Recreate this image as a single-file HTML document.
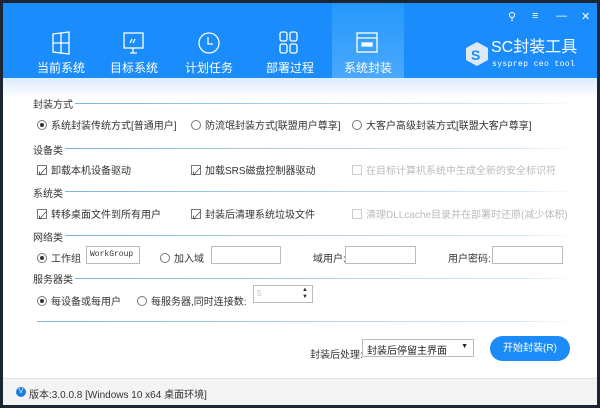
<!DOCTYPE html><html><head><meta charset="utf-8"><style>
*{margin:0;padding:0;box-sizing:border-box}
body{width:600px;height:408px;background:#1b2533;position:relative;overflow:hidden;font-family:"Liberation Sans","Noto Sans CJK SC",sans-serif;font-size:10px;color:#333}
.win{position:absolute;left:3px;top:3px;width:594px;height:402px;background:#fff}
.hdr{position:absolute;left:0;top:0;width:594px;height:75px;background:#1a8cfb}
.tab{position:absolute;top:0;height:75px;width:72px;text-align:center;color:#fff;font-size:12px}
.tab span{position:absolute;left:0;right:0;top:56px}
.tab svg{position:absolute;left:22px;top:28px}
.act{background:linear-gradient(#2598fc,#4aa8fd)}
.ctl{position:absolute;top:7px;color:#fff;font-size:11px}
.cont{position:absolute;left:0;top:75px;width:594px;height:300px;background:linear-gradient(#dcecfb 0,#fff 20px)}
.sec{position:absolute;left:30px;font-size:10px;color:#333}
.ln{position:absolute;height:1px;background:linear-gradient(90deg,#7cb6dc,#d8e9f5 90%,#fff)}
.it{position:absolute;font-size:10px;color:#333;white-space:nowrap}
.it i{display:inline-block;width:10px;height:10px;border:1px solid #777;vertical-align:-1px;margin-right:4px;background:#fff;position:relative}
.r i{border-radius:50%}
.r.on i:after{content:"";position:absolute;left:2px;top:2px;width:4px;height:4px;border-radius:50%;background:#333}
.c.on i:after{content:"✓";position:absolute;left:0;top:-3px;font-size:10px;color:#222}
.dis{color:#bbb}.dis i{border-color:#ccc}
.inp{position:absolute;height:18px;border:1px solid #bbb;background:#fff;font-size:8px;font-family:"Liberation Mono",monospace;padding:3px}
.ft{position:absolute;left:0;top:375px;width:594px;height:27px;background:#f4f4f4;border-top:1px solid #e3e3e3;font-size:10px;padding:7px 0 0 20px}
</style></head><body><div class="win">
<div class="hdr">
<div class="ctl" style="left:505px">&#9906;</div><div class="ctl" style="left:529px">≡</div><div class="ctl" style="left:553px">—</div><div class="ctl" style="left:578px">✕</div>
<div class="tab" style="left:22px"><svg width="28" height="24"><g fill="none" stroke="#fff" stroke-width="1.3"><path d="M6 3l16-2v22l-16-2z M6 12h16 M14 2v20"/></g></svg><span>当前系统</span></div>
<div class="tab" style="left:95px"><svg width="28" height="26"><g fill="none" stroke="#fff" stroke-width="1.3"><rect x="4" y="2" width="19" height="15"/><path d="M10 22h7 M13 17v5 M12 8l-2 4 M15 8l-2 4"/></g></svg><span>目标系统</span></div>
<div class="tab" style="left:170px"><svg width="28" height="26"><g fill="none" stroke="#fff" stroke-width="1.3"><circle cx="14" cy="12" r="10"/><path d="M13 6v7h5"/></g></svg><span>计划任务</span></div>
<div class="tab" style="left:251px"><svg width="28" height="26"><g fill="none" stroke="#fff" stroke-width="1.3"><rect x="4" y="1" width="7" height="9" rx="2"/><rect x="14" y="1" width="7" height="9" rx="2"/><rect x="4" y="13" width="7" height="9" rx="2"/><rect x="14" y="13" width="7" height="9" rx="2"/></g></svg><span>部署过程</span></div>
<div class="tab act" style="left:329px"><svg width="28" height="26"><g fill="none" stroke="#fff" stroke-width="1.3"><rect x="3" y="2" width="20" height="19"/><path d="M3 7h20"/><rect x="8" y="12" width="10" height="3" fill="#fff"/></g></svg><span>系统封装</span></div>
<svg style="position:absolute;left:460px;top:37px" width="28" height="28"><path d="M14 2l11 6v12l-11 6-11-6V8z" fill="#dfe9f5"/><text x="8" y="20" font-size="14" font-weight="bold" fill="#1a8cfb" font-family="Liberation Sans">S</text></svg>
<div style="position:absolute;left:488px;top:35px;color:#fff;font-size:16px;line-height:20px">SC封装工具</div>
<div style="position:absolute;left:489px;top:57px;color:#fff;font-size:8px;line-height:9px;font-family:'Liberation Mono',monospace;letter-spacing:.4px">sysprep ceo tool</div>
</div>
<div class="cont"></div>
<div class="sec" style="top:93px">封装方式</div><div class="ln" style="left:72px;top:100px;width:500px"></div>
<div class="it r on" style="left:34px;top:114px"><i></i>系统封装传统方式[普通用户]</div>
<div class="it r" style="left:188px;top:114px"><i></i>防流氓封装方式[联盟用户尊享]</div>
<div class="it r" style="left:349px;top:114px"><i></i>大客户高级封装方式[联盟大客户尊享]</div>
<div class="sec" style="top:139px">设备类</div><div class="ln" style="left:62px;top:145px;width:510px"></div>
<div class="it c on" style="left:34px;top:159px"><i></i>卸载本机设备驱动</div>
<div class="it c on" style="left:188px;top:159px"><i></i>加载SRS磁盘控制器驱动</div>
<div class="it c dis" style="left:349px;top:159px"><i></i>在目标计算机系统中生成全新的安全标识符</div>
<div class="sec" style="top:182px">系统类</div><div class="ln" style="left:62px;top:188px;width:510px"></div>
<div class="it c on" style="left:34px;top:203px"><i></i>转移桌面文件到所有用户</div>
<div class="it c on" style="left:188px;top:203px"><i></i>封装后清理系统垃圾文件</div>
<div class="it c dis" style="left:349px;top:203px"><i></i>清理DLLcache目录并在部署时还原(减少体积)</div>
<div class="sec" style="top:226px">网络类</div><div class="ln" style="left:62px;top:232px;width:510px"></div>
<div class="it r on" style="left:34px;top:247px"><i></i>工作组</div>
<div class="inp" style="left:83px;top:243px;width:54px">WorkGroup</div>
<div class="it r" style="left:157px;top:247px"><i></i>加入域</div>
<div class="inp" style="left:208px;top:243px;width:70px"></div>
<div class="it" style="left:310px;top:247px">域用户:</div>
<div class="inp" style="left:342px;top:243px;width:71px"></div>
<div class="it" style="left:445px;top:247px">用户密码:</div>
<div class="inp" style="left:489px;top:243px;width:71px"></div>
<div class="sec" style="top:268px">服务器类</div><div class="ln" style="left:72px;top:275px;width:500px"></div>
<div class="it r on" style="left:34px;top:290px"><i></i>每设备或每用户</div>
<div class="it r" style="left:134px;top:290px"><i></i>每服务器,同时连接数:</div>
<div class="inp" style="left:250px;top:282px;width:60px;color:#bbb;font-family:'Liberation Sans'">5<span style="position:absolute;right:4px;top:1px;color:#333;font-size:6px;line-height:7px">▲<br>▼</span></div>
<div class="ln" style="left:34px;top:318px;width:538px"></div>
<div class="it" style="left:307px;top:343px">封装后处理:</div>
<div class="inp" style="left:359px;top:336px;width:112px;height:18px;font-family:'Liberation Sans','Noto Sans CJK SC';font-size:10px;color:#222;padding:2px 4px">封装后停留主界面<span style="position:absolute;right:5px;top:3px;font-size:7px">▼</span></div>
<div style="position:absolute;left:487px;top:333px;width:80px;height:25px;border-radius:13px;background:#1b8cf7;color:#fff;text-align:center;line-height:25px;font-size:10px">开始封装(R)</div>
<div class="ft"><span style="position:absolute;left:13px;top:8px;width:10px;height:10px;border-radius:50%;background:#1a7de0;color:#fff;font-size:7px;text-align:center;line-height:10px">V</span><span style="margin-left:6px">版本:3.0.0.8 [Windows 10 x64 桌面环境]</span></div>
</div></body></html>
